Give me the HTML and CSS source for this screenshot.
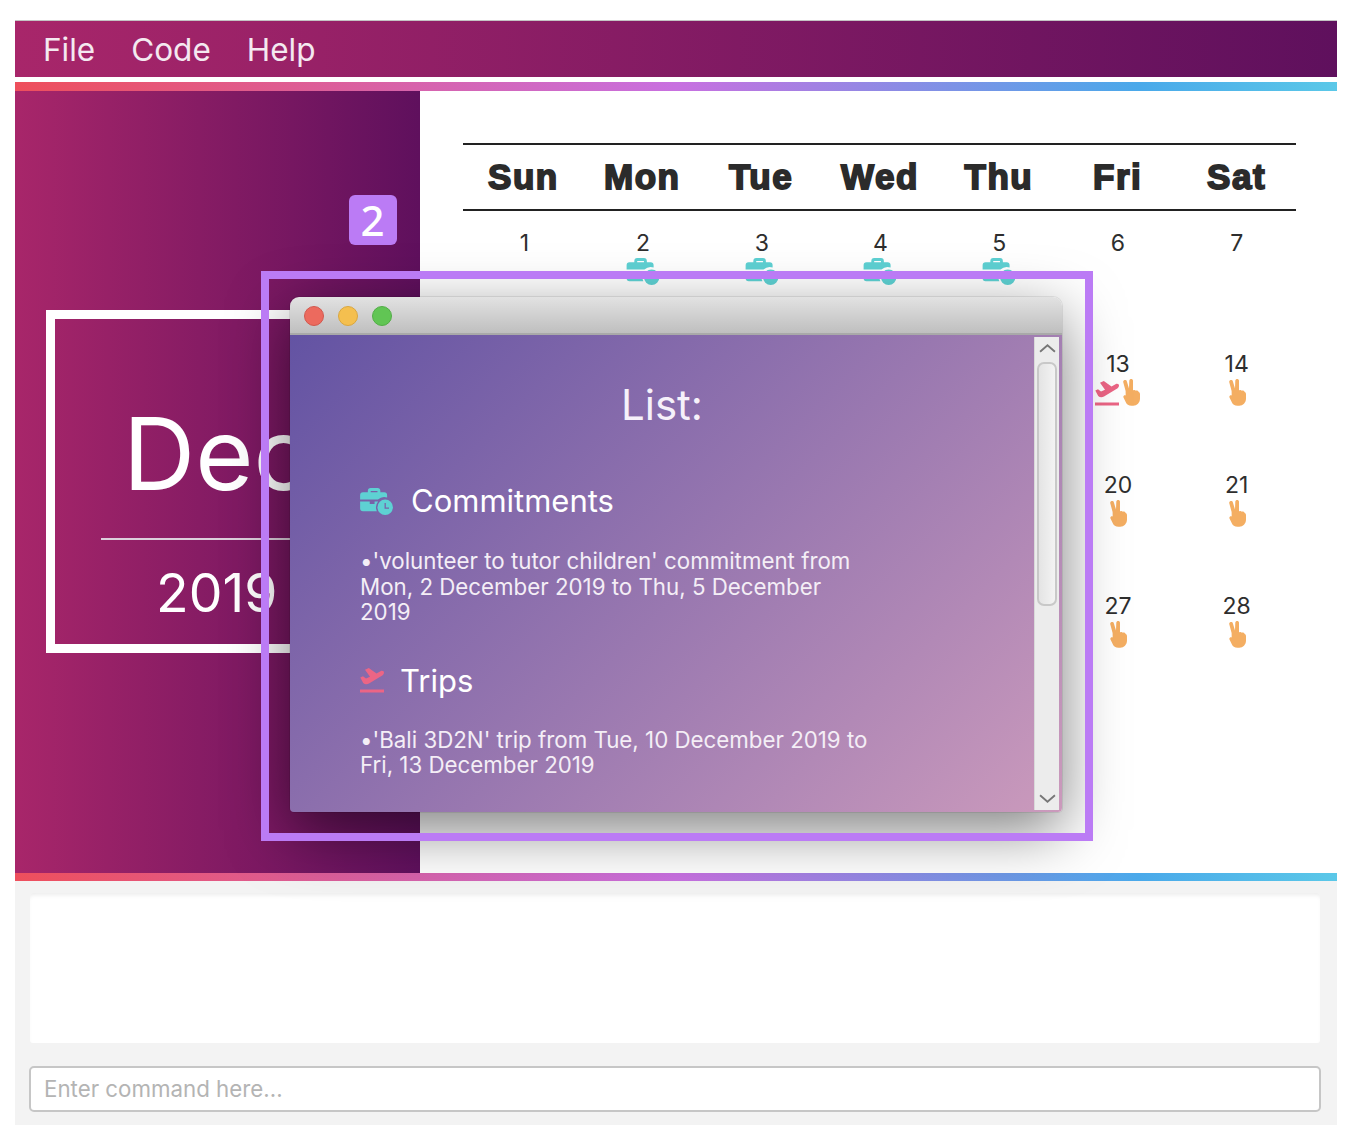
FILE: index.html
```html
<!DOCTYPE html>
<html lang="en">
<head>
    <meta charset="UTF-8">
    <meta name="viewport" content="width=device-width, initial-scale=1.0">
    <title>Calendar</title>
    <link rel="stylesheet" href="styles.css">
</head>
<body>
    <svg class="icon-defs" width="0" height="0">
        <defs>
            <symbol id="icon-work" viewBox="0 0 34 28">
                <path fill="#5ed1d3" d="M8 4.500V3a3 3 0 0 1 3-3h7a3 3 0 0 1 3 3v1.500h4a3 3 0 0 1 3 3V9.800a9.500 9.500 0 0 0-9.500 2.200H0V7.500a3 3 0 0 1 3-3zM11 3v1.500h7V3zM0 14h10v2.500h5V14h3.700A9.500 9.500 0 0 0 17.400 24H3a3 3 0 0 1-3-3z"/>
                <circle cx="26" cy="20" r="8" fill="#5ed1d3"/>
                <path fill="none" stroke="#7a62a8" stroke-width="1.300" d="M26 15.500V20.800h4"/>
            </symbol>
            <symbol id="icon-trip" viewBox="0 0 24 25">
                <path fill="#ec6585" d="M.3 9.500L3 8.200 6 10.500 10 8.700 5 1.800 8.800 0l7.700 5.500 4-2.300c2-1 3.500 0 3.500 1.300 0 1.500-1 2.700-3 3.800L9 15.500c-2.200 1.200-4.300.8-5.800-.5z"/>
                <rect y="21.500" width="24" height="3" fill="#ec6585"/>
            </symbol>
            <symbol id="icon-hand" viewBox="0 0 18 27">
                <path fill="#f4ae62" d="M1.200 3C1 .8 4.400.2 4.900 2.400L7 9.500 7.300 1.800c.1-2.300 3.700-2.300 3.700 0v9.700c1-.8 2.300-.6 2.800.3 1.200-.5 2.600.1 2.800 1.300.9.200 1.400 1 1.400 2.200v4.200c0 4.200-3 7.200-6.800 7.200H9.500c-3 0-4.800-1.500-5.700-3.500L1.500 18.500c-.7-1.500 1-2.800 2.200-2L3.600 12z"/>
            </symbol>
        </defs>
    </svg>

    <div class="app">
        <div class="menu-bar">
            <span class="menu-item">File</span>
            <span class="menu-item">Code</span>
            <span class="menu-item">Help</span>
        </div>
        <div class="rainbow rainbow-top"></div>

        <div class="main">
            <div class="month-panel">
                <div class="month-box">
                    <div class="month-name">Dec</div>
                    <div class="month-year">2019</div>
                </div>
            </div>

            <div class="calendar">
                <div class="week-head">
                    <div>Sun</div><div>Mon</div><div>Tue</div><div>Wed</div><div>Thu</div><div>Fri</div><div>Sat</div>
                </div>
                <div class="days">
                    <div class="day">1</div>
                    <div class="day">2<span class="marks"><svg class="mark-work"><use href="#icon-work"/></svg></span></div>
                    <div class="day">3<span class="marks"><svg class="mark-work"><use href="#icon-work"/></svg></span></div>
                    <div class="day">4<span class="marks"><svg class="mark-work"><use href="#icon-work"/></svg></span></div>
                    <div class="day">5<span class="marks"><svg class="mark-work"><use href="#icon-work"/></svg></span></div>
                    <div class="day">6</div>
                    <div class="day">7</div>

                    <div class="day day-hidden"></div>
                    <div class="day day-hidden"></div>
                    <div class="day day-hidden"></div>
                    <div class="day day-hidden"></div>
                    <div class="day day-hidden"></div>
                    <div class="day">13<span class="marks"><svg class="mark-trip"><use href="#icon-trip"/></svg><svg class="mark-hand"><use href="#icon-hand"/></svg></span></div>
                    <div class="day">14<span class="marks"><svg class="mark-hand"><use href="#icon-hand"/></svg></span></div>

                    <div class="day day-hidden"></div>
                    <div class="day day-hidden"></div>
                    <div class="day day-hidden"></div>
                    <div class="day day-hidden"></div>
                    <div class="day day-hidden"></div>
                    <div class="day">20<span class="marks"><svg class="mark-hand"><use href="#icon-hand"/></svg></span></div>
                    <div class="day">21<span class="marks"><svg class="mark-hand"><use href="#icon-hand"/></svg></span></div>

                    <div class="day day-hidden"></div>
                    <div class="day day-hidden"></div>
                    <div class="day day-hidden"></div>
                    <div class="day day-hidden"></div>
                    <div class="day day-hidden"></div>
                    <div class="day">27<span class="marks"><svg class="mark-hand"><use href="#icon-hand"/></svg></span></div>
                    <div class="day">28<span class="marks"><svg class="mark-hand"><use href="#icon-hand"/></svg></span></div>
                </div>
            </div>
        </div>

        <div class="rainbow rainbow-bottom"></div>

        <div class="bottom">
            <div class="result-box"></div>
            <div class="command-box">Enter command here...</div>
        </div>

        <!-- list window sits over the calendar -->
        <div class="callout-badge">2</div>
        <div class="popup">
            <div class="popup-titlebar">
                <span class="light light-red"></span>
                <span class="light light-yellow"></span>
                <span class="light light-green"></span>
            </div>
            <div class="popup-body">
                <div class="popup-content">
                    <div class="list-title">List:</div>
                    <div class="list-head list-head-work">
                        <svg class="list-icon-work"><use href="#icon-work"/></svg>
                        <span>Commitments</span>
                    </div>
                    <p class="list-text">•'volunteer to tutor children' commitment from Mon, 2 December 2019 to Thu, 5 December 2019</p>
                    <div class="list-head list-head-trip">
                        <svg class="list-icon-trip"><use href="#icon-trip"/></svg>
                        <span>Trips</span>
                    </div>
                    <p class="list-text list-text-trip">•'Bali 3D2N' trip from Tue, 10 December 2019 to Fri, 13 December 2019</p>
                </div>
                <div class="scrollbar">
                    <svg class="scroll-arrow" viewBox="0 0 16 10"><path d="M1 8l7-6 7 6" fill="none" stroke="#777" stroke-width="1.800"/></svg>
                    <div class="scroll-thumb"></div>
                    <svg class="scroll-arrow scroll-arrow-down" viewBox="0 0 16 10"><path d="M1 2l7 6 7-6" fill="none" stroke="#777" stroke-width="1.800"/></svg>
                </div>
            </div>
        </div>
        <div class="callout-frame"></div>
    </div>
</body>
</html>
```

FILE: styles.css
```css
html, body {
    margin: 0;
    padding: 0;
    background: white;
}
body {
    font-family: Inter, "Noto Sans", sans-serif;
    height: 1144px;
    overflow: hidden;
}
.icon-defs {
    position: absolute;
}
.app {
    position: relative;
    margin: 20px 19px 0 15px;
    height: 1105px;
    display: flex;
    flex-direction: column;
    border-top: 1px solid #c4c4c4;
    box-sizing: border-box;
    background: #f3f3f3;
    overflow: hidden;
}

/* menu */
.menu-bar {
    height: 56px;
    display: flex;
    align-items: center;
    gap: 36px;
    padding-left: 28px;
    background: linear-gradient(90deg, #a8266a 0%, #5f105d 100%);
    border-bottom: 5px solid white;
    color: #f4e9f0;
    font-size: 31.5px;
    flex-shrink: 0;
}
.rainbow {
    height: 9px;
    flex-shrink: 0;
    background: linear-gradient(90deg, #ee4f5c 0%, #c870e0 50%, #4aa9ea 85%, #5bc8e8 100%);
}
.rainbow-bottom {
    height: 8px;
}

/* month + calendar */
.main {
    height: 782px;
    display: flex;
    background: white;
    flex-shrink: 0;
}
.month-panel {
    width: 405px;
    flex-shrink: 0;
    box-sizing: border-box;
    padding: 219px 0 0 31px;
    background: linear-gradient(90deg, #a8266a 0%, #5f105d 100%);
}
.month-box {
    width: 344px;
    height: 343px;
    box-sizing: border-box;
    border: 9px solid white;
    color: white;
    text-align: center;
}
.month-name {
    font-size: 100px;
    line-height: 120px;
    margin: 75px 36px 0 46px;
    height: 120px;
    padding-bottom: 24px;
    border-bottom: 2px solid #dcd0dc;
    white-space: nowrap;
    text-align: left;
    text-indent: 22px;
    font-weight: 400;
}
.month-year {
    font-size: 53.5px;
    line-height: 60px;
    margin-top: 23px;
    text-align: left;
    padding-left: 101px;
}
.calendar {
    flex: 1;
    padding: 52px 41px 0 43px;
}
.week-head {
    display: grid;
    grid-template-columns: repeat(7, 1fr);
    height: 64px;
    padding-left: 1px;
    align-items: center;
    text-align: center;
    border-top: 2px solid #222;
    border-bottom: 2px solid #222;
    font-family: "Liberation Sans", Arial, sans-serif;
    font-weight: 700;
    font-size: 35px;
    letter-spacing: 1.5px;
    -webkit-text-stroke: 1.8px #2b2b2b;
    color: #2b2b2b;
}
.days {
    display: grid;
    grid-template-columns: repeat(7, 1fr);
    grid-auto-rows: 121px;
    padding: 19px 0 0 2px;
}
.day {
    display: flex;
    flex-direction: column;
    align-items: center;
    font-size: 23px;
    line-height: 27px;
    color: #2e2e2e;
}
.marks {
    display: flex;
    align-items: flex-end;
    justify-content: center;
    gap: 3px;
    height: 28px;
}
.mark-work {
    width: 34px;
    height: 27px;
    margin-top: 2px;
}
.mark-trip {
    width: 24px;
    height: 25px;
}
.mark-hand {
    width: 18px;
    height: 27px;
}

/* bottom command area */
.bottom {
    flex: 1;
    box-sizing: border-box;
    padding: 12px 16px 13px 14px;
    display: flex;
    flex-direction: column;
    background: #f3f3f3;
}
.result-box {
    height: 150px;
    margin: 0 1px 23px 1px;
    background: white;
    border-radius: 3px;
    box-shadow: inset 0 4px 4px -2px #ececec;
}
.command-box {
    height: 46px;
    box-sizing: border-box;
    border: 2px solid #c6c6c6;
    border-radius: 5px;
    background: white;
    padding-left: 13px;
    line-height: 42px;
    font-size: 22.3px;
    color: #b4b4b4;
}

/* callout over the screenshot */
.callout-badge {
    position: absolute;
    left: 334px;
    top: 174px;
    width: 47px;
    height: 50px;
    padding-right: 1px;
    border-radius: 6px;
    background: #bb7bf5;
    color: white;
    font-family: "Noto Sans", sans-serif;
    font-size: 42px;
    font-weight: 500;
    line-height: 50px;
    text-align: center;
}
.callout-frame {
    position: absolute;
    left: 246px;
    top: 250px;
    width: 832px;
    height: 570px;
    box-sizing: border-box;
    border: 8px solid #bb7bf5;
    pointer-events: none;
}

/* list popup window */
.popup {
    position: absolute;
    left: 275px;
    top: 276px;
    width: 772px;
    height: 515px;
    border-radius: 9px 9px 4px 4px;
    overflow: hidden;
    display: flex;
    flex-direction: column;
    box-shadow: 0 0 0 1px rgba(0,0,0,0.08), 0 18px 60px rgba(0,0,0,0.5);
}
.popup-titlebar {
    height: 38px;
    flex-shrink: 0;
    box-sizing: border-box;
    display: flex;
    align-items: center;
    gap: 14px;
    padding: 2px 0 0 14px;
    background: linear-gradient(180deg, #e2e2e2 0%, #bfbfbf 100%);
    border-bottom: 2px solid #a9a9a9;
}
.light {
    width: 20px;
    height: 20px;
    border-radius: 50%;
    box-sizing: border-box;
}
.light-red {
    background: #ec6a5e;
    border: 1px solid #d1584e;
}
.light-yellow {
    background: #f4bf4f;
    border: 1px solid #d9a63f;
}
.light-green {
    background: #61c554;
    border: 1px solid #52ad47;
}
.popup-body {
    flex: 1;
    display: flex;
    min-height: 0;
    box-sizing: border-box;
    padding: 2px 3px 2px 0;
    background: linear-gradient(135deg, #6353a3 0%, #cb9abc 100%);
}
.popup-content {
    flex: 1;
    padding: 0 70px;
    color: white;
}
.list-title {
    font-size: 42px;
    line-height: 48px;
    text-align: center;
    padding: 44px 0 0;
    color: #f6f1fa;
}
.list-head {
    display: flex;
    align-items: center;
    font-size: 31px;
    line-height: 38px;
    gap: 18px;
}
.list-head-work {
    margin-top: 53px;
}
.list-head-trip {
    margin-top: 37px;
}
.list-icon-work {
    width: 33px;
    height: 27px;
}
.list-icon-trip {
    width: 24px;
    height: 25px;
    margin-right: -2px;
}
.list-text {
    margin: 28px 0 0;
    width: 510px;
    font-size: 22.3px;
    line-height: 25.5px;
    color: #f4eef6;
}
.list-text-trip {
    margin-top: 27px;
}
.scrollbar {
    width: 25px;
    flex-shrink: 0;
    box-sizing: border-box;
    padding-top: 6px;
    background: #ececec;
    border-left: 1px solid #d9d9d9;
    display: flex;
    flex-direction: column;
    align-items: center;
}
.scroll-arrow {
    width: 17px;
    height: 11px;
    flex-shrink: 0;
}
.scroll-arrow-down {
    margin-top: auto;
    margin-bottom: 6px;
}
.scroll-thumb {
    width: 20px;
    height: 244px;
    margin-top: 8px;
    box-sizing: border-box;
    border: 2px solid #c8c8c8;
    border-radius: 7px;
    background: linear-gradient(90deg, #e4e4e4, #f3f3f3);
}
```
